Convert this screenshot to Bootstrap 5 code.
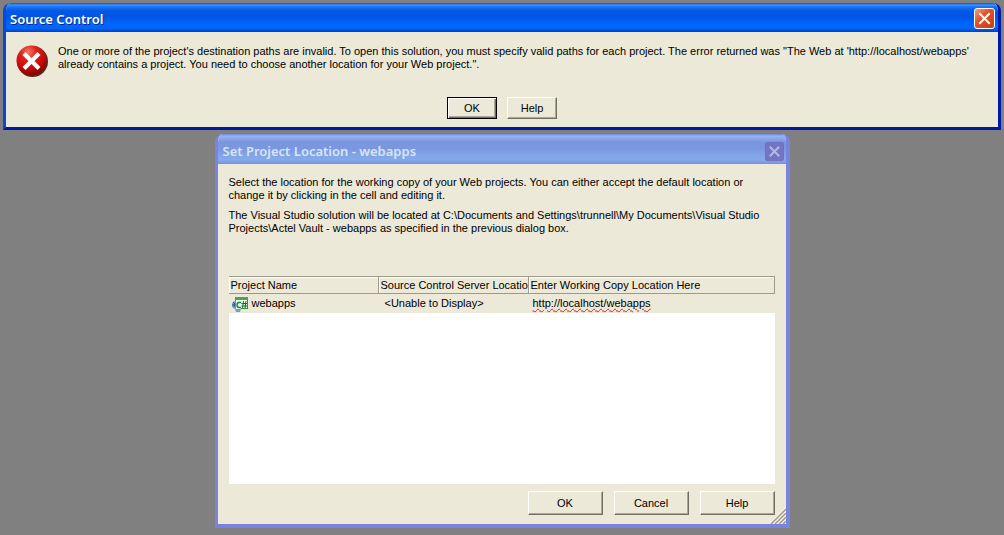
<!DOCTYPE html>
<html lang="en">
<head>
<meta charset="utf-8">
<meta name="viewport" content="width=device-width, initial-scale=1">
<title>Source Control</title>
<link href="https://cdn.jsdelivr.net/npm/bootstrap@5.3.0/dist/css/bootstrap.min.css" rel="stylesheet">
<style>
  body { background: #808080; color: #000; font: 11px/13px "Liberation Sans", Arial, sans-serif; }
  .page { padding: 3px 3px 6px; gap: 4px; }
  .xp-window { background: #ece9d8; border: 3px solid; border-top: 0; border-radius: 8px 8px 0 0; overflow: hidden; }
  .xp-window.active { border-color: #0b50e6 #0019a8 #0019a0 #0b46dc; }
  .xp-window.inactive { border-color: #7a83dd; border-right-width: 4px; border-bottom-width: 4px; width: 100%; max-width: 575px; }
  .xp-title { height: 29px; color: #fff; font: 600 13px/18px "Noto Sans", sans-serif; padding: 2px 6px 0 7px; margin: 0 -3px; }
  .xp-title h1 { font: inherit; margin: 0; }
  .active .xp-title { text-shadow: 1px 1px 0 #0b2d92;
    background: linear-gradient(#0a4fd6 0, #3c93ff 2px, #1a72f5 4px, #0058e6 8px, #0055e5 14px, #0064fb 20px, #0068ff 25px, #0052e0 27px, #0040c4 29px); }
  .inactive .xp-title { height: 30px; color: #d8e4f8; margin-right: -4px; padding: 4px 6px 0 8px;
    background: linear-gradient(#6a82d8 0, #98b4f2 2px, #8aa4ea 5px, #7a96df 8px, #7b97e0 15px, #82a5e8 21px, #84a8ea 26px, #7a90dc 30px); }
  .close-btn { width: 21px; height: 21px; padding: 0; border: 1px solid #fff; border-radius: 3px; background: linear-gradient(135deg, #f0a088, #e0532c 40%, #c83c14); }
  .inactive .close-btn { width: 19px; height: 19px; border-color: #7070c4; border-radius: 2px; background: #7474c2; }
  .close-btn svg, .stop-icon, .cs-icon { display: block; flex: none; }
  .message-row { padding: 13px 10px 0; gap: 10px; }
  .actions { gap: 10px; padding: 20px 0 8px; }
  .xp-btn { width: 50px; height: 22px; padding: 0; color: #000; background: #ece9d8; border: 1px solid; border-color: #fff #716f64 #716f64 #fff; box-shadow: inset -1px -1px #aca899; }
  .xp-btn.default { border-color: #000; box-shadow: inset 1px 1px #fff, inset -1px -1px #716f64, inset -2px -2px #aca899; }
  .setup { padding: 12px 11px 9px; }
  .setup p { margin: 0 0 7px; }
  .file-list { height: 208px; margin-top: 41px; background: #fff; }
  .file-list table { width: 100%; table-layout: fixed; border-collapse: separate; border-spacing: 0; }
  .file-list th, .file-list td { font-weight: 400; white-space: nowrap; overflow: hidden; background: #ece9d8; padding: 0 0 0 4px; height: 19px; }
  .file-list th { height: 18px; padding-left: 2px; border: solid #9c9a8c; border-width: 1px 1px 1px 0; box-shadow: inset 1px 1px #fff; }
  .file-list td:first-child { padding-left: 3px; }
  .file-list td:nth-child(2) { padding-left: 6px; }
  .name-col { width: 150px; }
  .misspelt { text-decoration: underline wavy #d82020 1px; text-underline-offset: 1px; }
  .dialog-buttons { gap: 11px; padding-top: 7px; }
  .dialog-buttons .xp-btn { width: 75px; height: 24px; }
  .size-grip { right: 0; bottom: 0; }
</style>
</head>
<body>
<main class="page d-flex flex-column align-items-center">
  <section class="xp-window active w-100" role="alertdialog" aria-labelledby="error-title">
    <header class="xp-title d-flex align-items-center justify-content-between">
      <h1 id="error-title">Source Control</h1>
      <button type="button" class="close-btn" aria-label="Close">
        <svg width="19" height="19" viewBox="0 0 19 19"><path d="M5 5l9 9M14 5l-9 9" stroke="#fff" stroke-width="2" stroke-linecap="square"/></svg>
      </button>
    </header>
    <div class="message-row d-flex">
      <svg class="stop-icon" width="32" height="32" viewBox="0 0 32 32" aria-hidden="true">
        <defs><radialGradient id="ball" cx=".4" cy=".22" r=".8"><stop offset="0" stop-color="#f47a68"/><stop offset=".35" stop-color="#dc2018"/><stop offset=".7" stop-color="#c80808"/><stop offset="1" stop-color="#7c0000"/></radialGradient></defs>
        <circle cx="16.500" cy="16.500" r="15.500" fill="#5a2a24"/>
        <circle cx="15.500" cy="15.500" r="15" fill="url(#ball)"/>
        <path d="M9.500 10L21.500 22M21.500 10L9.500 22" stroke="#fff" stroke-width="4.200" stroke-linecap="square"/>
      </svg>
      <div>One or more of the project's destination paths are invalid. To open this solution, you must specify valid paths for each project. The error returned was "The Web at 'http://localhost/webapps'<br>already contains a project. You need to choose another location for your Web project.".</div>
    </div>
    <div class="actions d-flex justify-content-center">
      <button type="button" class="xp-btn default">OK</button>
      <button type="button" class="xp-btn">Help</button>
    </div>
  </section>

  <section class="xp-window inactive position-relative" role="dialog" aria-labelledby="setup-title">
    <header class="xp-title d-flex align-items-center justify-content-between">
      <h1 id="setup-title">Set Project Location - webapps</h1>
      <button type="button" class="close-btn" aria-label="Close">
        <svg width="17" height="17" viewBox="0 0 17 17"><path d="M4.500 4.500l8 8M12.500 4.500l-8 8" stroke="#b4b8ec" stroke-width="2" stroke-linecap="square"/></svg>
      </button>
    </header>
    <div class="setup">
      <p>Select the location for the working copy of your Web projects. You can either accept the default location or<br>change it by clicking in the cell and editing it.</p>
      <p>The Visual Studio solution will be located at C:\Documents and Settings\trunnell\My Documents\Visual Studio<br>Projects\Actel Vault - webapps as specified in the previous dialog box.</p>
      <div class="file-list">
        <table>
          <thead><tr><th class="name-col" scope="col">Project Name</th><th class="name-col" scope="col">Source Control Server Locatio</th><th scope="col">Enter Working Copy Location Here</th></tr></thead>
          <tbody><tr>
            <td><div class="d-flex align-items-center gap-1">
              <svg class="cs-icon" width="16" height="16" viewBox="0 0 16 16" aria-hidden="true">
                <rect x="3.500" y="1.500" width="12" height="11" fill="#f4fff4" stroke="#2f8f3c"/>
                <path d="M3 1h13v3H3z" fill="#49a552"/>
                <circle cx="4" cy="9" r="4" fill="#6f9fc4"/><path d="M1 6l2 2-1 3M0 9h2" stroke="#28506e" fill="none"/>
                <path d="M3 13h6l-1 3H4z" fill="#6e9fd0"/><path d="M4 5h5v8H4z" fill="#e8f6fa"/>
                <path d="M9 6.500H7q-2 0-2 2.500t2 2.500h2" fill="none" stroke="#19863a" stroke-width="1.400"/>
                <path d="M11.500 5l-1 7M14 5l-1 7M9.500 7.500H15M9.500 10H15" stroke="#08751a"/>
              </svg>
              <span>webapps</span></div></td>
            <td>&lt;Unable to Display&gt;</td>
            <td><span class="misspelt">http://localhost/webapps</span></td>
          </tr></tbody>
        </table>
      </div>
      <div class="dialog-buttons d-flex justify-content-end">
        <button type="button" class="xp-btn">OK</button>
        <button type="button" class="xp-btn">Cancel</button>
        <button type="button" class="xp-btn">Help</button>
      </div>
    </div>
    <svg class="size-grip position-absolute" width="17" height="17" viewBox="0 0 17 17" aria-hidden="true">
      <path d="M1 17L17 1M5 17L17 5M9 17L17 9M13 17L17 13" stroke="#fff" stroke-width="1.500"/>
      <path d="M2 17L17 2M6 17L17 6M10 17L17 10M14 17L17 14" stroke="#9d9a88" stroke-width="1.500"/>
    </svg>
  </section>
</main>
<script src="https://cdn.jsdelivr.net/npm/bootstrap@5.3.0/dist/js/bootstrap.bundle.min.js"></script>
</body>
</html>
